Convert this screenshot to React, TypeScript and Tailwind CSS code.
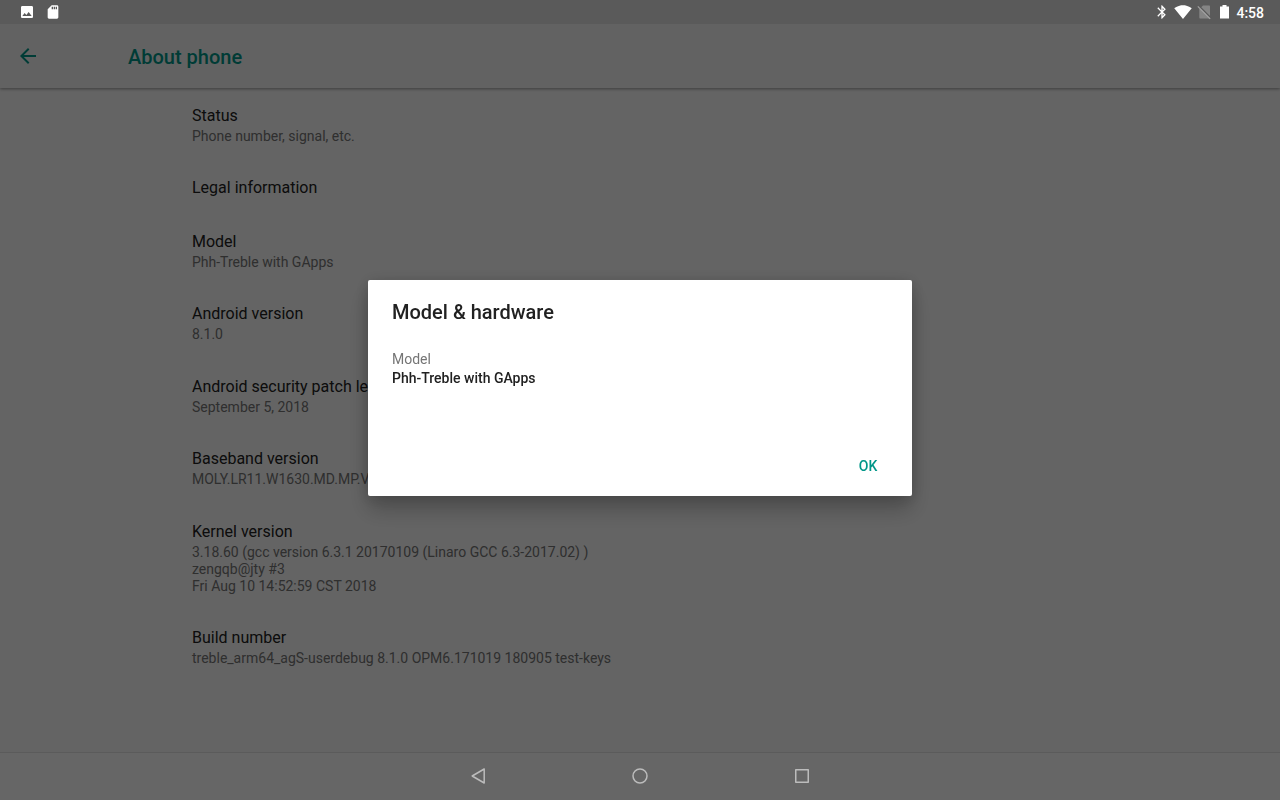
import { MdArrowBack, MdBluetooth, MdImage, MdSdCard, MdSignalWifi4Bar } from 'react-icons/md';

interface AboutItem {
  title: string;
  summary?: string[];
}

const items: AboutItem[] = [
  { title: 'Status', summary: ['Phone number, signal, etc.'] },
  { title: 'Legal information' },
  { title: 'Model', summary: ['Phh-Treble with GApps'] },
  { title: 'Android version', summary: ['8.1.0'] },
  { title: 'Android security patch level', summary: ['September 5, 2018'] },
  { title: 'Baseband version', summary: ['MOLY.LR11.W1630.MD.MP.V9'] },
  {
    title: 'Kernel version',
    summary: [
      '3.18.60 (gcc version 6.3.1 20170109 (Linaro GCC 6.3-2017.02) )',
      'zengqb@jty #3',
      'Fri Aug 10 14:52:59 CST 2018',
    ],
  },
  { title: 'Build number', summary: ['treble_arm64_agS-userdebug 8.1.0 OPM6.171019 180905 test-keys'] },
];

const NoSimIcon = () => (
  <svg width="16" height="16" viewBox="0 0 16 16">
    <path d="M7 1.5h6c.6 0 1 .4 1 1v11c0 .6-.4 1-1 1H4.3c-.6 0-1-.4-1-1V5.3z" fill="#858585" />
    <path d="M2.6 1.6 15 14" stroke="#5a5a5a" strokeWidth="1.4" />
    <path d="M1.8 2.4 14.2 14.8" stroke="#a3a3a3" strokeWidth="1.2" />
  </svg>
);

const BatteryIcon = () => (
  <svg width="16" height="16" viewBox="0 0 16 16" fill="currentColor">
    <path d="M6.5 1h4v1.5H13v12H4v-12h2.5z" />
  </svg>
);

const StatusBar = () => (
  <div className="relative z-20 flex h-6 items-center justify-between bg-[#5a5a5a] pl-[19px] pr-4 text-white">
    <div className="flex items-center gap-[10px]">
      <MdImage size={16} />
      <MdSdCard size={16} />
    </div>
    <div className="flex items-center gap-1">
      <MdBluetooth size={16} />
      <MdSignalWifi4Bar size={18} />
      <div className="flex gap-1">
        <NoSimIcon />
        <BatteryIcon />
      </div>
      <span className="pt-px text-sm font-medium">4:58</span>
    </div>
  </div>
);

const Header = () => (
  <header className="relative flex h-16 items-center bg-[#f5f5f5] text-[#009688] shadow-[0_1px_3px_rgba(0,0,0,0.4)]">
    <button type="button" aria-label="Navigate up" className="ml-4 flex size-6 items-center justify-center">
      <MdArrowBack size={24} />
    </button>
    <h1 className="ml-[88px] pt-0.5 text-xl font-medium">About phone</h1>
  </header>
);

const AboutList = () => (
  <ul className="flex flex-1 flex-col justify-between px-48 pt-[18px] pb-[85px]">
    {items.map((item) => (
      <li key={item.title}>
        <h2 className="text-base leading-5 text-[#212121]">{item.title}</h2>
        {item.summary && (
          <p className="mt-0.5 text-sm leading-[17px] text-[#757575]">
            {item.summary.map((line) => (
              <span key={line} className="block">
                {line}
              </span>
            ))}
          </p>
        )}
      </li>
    ))}
  </ul>
);

const NavBar = () => (
  <nav className="relative z-20 flex h-12 items-center justify-center gap-[138px] border-t border-[#5b5b5b] bg-[#666666] pb-0.5 text-[#bcbcbc]">
    <button type="button" aria-label="Back">
      <svg width="24" height="24" viewBox="0 0 24 24" fill="none" stroke="currentColor" strokeWidth="1.5" strokeLinejoin="round">
        <path d="M18.2 5v14L6.2 12z" />
      </svg>
    </button>
    <button type="button" aria-label="Home">
      <svg width="24" height="24" viewBox="0 0 24 24" fill="none" stroke="currentColor" strokeWidth="1.5">
        <circle cx="12" cy="12" r="7" />
      </svg>
    </button>
    <button type="button" aria-label="Recent apps">
      <svg width="24" height="24" viewBox="0 0 24 24" fill="none" stroke="currentColor" strokeWidth="1.5" strokeLinejoin="round">
        <rect x="5.75" y="5.75" width="12.5" height="12.5" />
      </svg>
    </button>
  </nav>
);

const HardwareDialog = () => (
  <div className="fixed inset-0 z-10 flex items-center justify-center bg-black/60 pb-6">
    <div
      role="dialog"
      aria-modal="true"
      aria-labelledby="dialog-title"
      className="w-[544px] rounded-xs bg-white shadow-[0_14px_22px_rgba(0,0,0,0.22),0_2px_16px_rgba(0,0,0,0.18)]"
    >
      <h2 id="dialog-title" className="px-6 pt-[18px] text-xl leading-7 font-medium text-[#212121]">
        Model &amp; hardware
      </h2>
      <dl className="px-6 pt-6 text-sm leading-[19px]">
        <dt className="text-[#757575]">Model</dt>
        <dd className="font-medium text-[#212121]">Phh-Treble with GApps</dd>
      </dl>
      <div className="flex justify-end px-3 pt-[60px] pb-3">
        <button type="button" className="h-9 w-16 text-sm font-medium text-[#009688]">
          OK
        </button>
      </div>
    </div>
  </div>
);

const App = () => {
  return (
    <div className="flex min-h-screen flex-col bg-[#fafafa] font-['Roboto',sans-serif]">
      <StatusBar />
      <Header />
      <AboutList />
      <NavBar />
      <HardwareDialog />
    </div>
  );
};

export default App;
